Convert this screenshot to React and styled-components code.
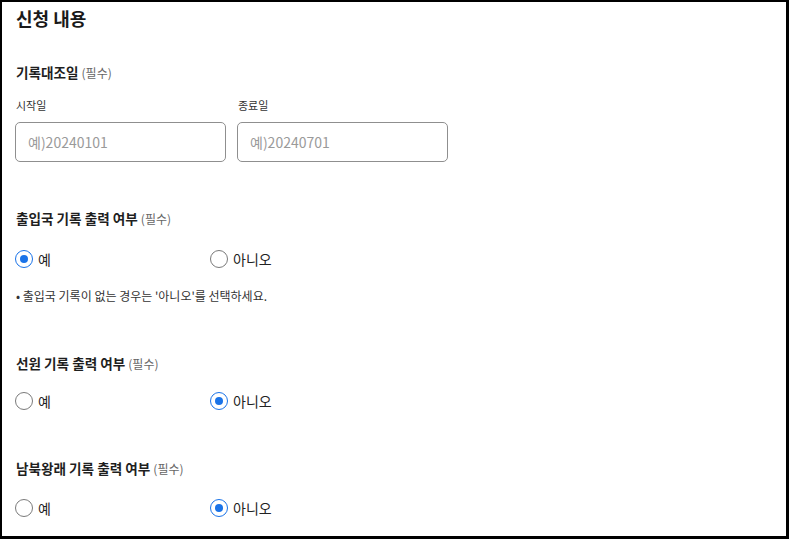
import React, { useState } from 'react';
import styled, { createGlobalStyle } from 'styled-components';

const GlobalStyle = createGlobalStyle`
  html, body {
    margin: 0;
    padding: 0;
    background: #fff;
  }
  body {
    font-family: "Noto Sans CJK KR", "Noto Sans", sans-serif;
    color: #222;
  }
`;

const Page = styled.div`
  box-sizing: border-box;
  height: 100vh;
  border-style: solid;
  border-color: #000;
  border-width: 2px 3px 3px 2px;
  padding: 4px 13px 0 13px;
  background: #fff;
  overflow: hidden;
`;

const Title = styled.h2`
  margin: 0 0 0 1px;
  font-size: 18px;
  line-height: 24px;
  height: 24px;
  font-weight: 700;
  color: #1a1a1a;
`;

const Section = styled.section`
  margin-top: ${(p) => p.$top}px;
`;

const SectionTitle = styled.h3`
  margin: 0 0 0 1px;
  font-size: 13.6px;
  line-height: 20px;
  height: 20px;
  font-weight: 700;
  color: #1f1f1f;
  white-space: nowrap;
`;

const Required = styled.span`
  font-size: 12px;
  line-height: 1;
  font-weight: 400;
  color: #666;
  margin-left: 3px;
`;

const DateRow = styled.div`
  display: flex;
  gap: 11px;
  margin-top: 15px;
`;

const Field = styled.label`
  display: flex;
  flex-direction: column;
  gap: 9px;
  width: 211px;
`;

const FieldLabel = styled.span`
  font-size: 11px;
  line-height: 16px;
  height: 16px;
  color: #333;
  margin-left: 1px;
`;

const Input = styled.input`
  box-sizing: border-box;
  width: 100%;
  height: 40px;
  border: 1px solid #8f8f8f;
  border-radius: 5px;
  padding: 0 12px;
  font-family: inherit;
  font-size: 14px;
  color: #222;
  outline: none;
  &::placeholder {
    color: #9a9a9a;
  }
`;

const RadioGroup = styled.div`
  display: flex;
  margin-top: ${(p) => p.$top ?? 20}px;
`;

const Option = styled.label`
  display: flex;
  align-items: center;
  gap: 5px;
  width: 195px;
  height: 20px;
  font-size: 14px;
  color: #222;
  cursor: pointer;
`;

const HiddenInput = styled.input`
  display: none;
`;

const Circle = styled.span`
  box-sizing: border-box;
  width: 18px;
  height: 18px;
  border-radius: 50%;
  border: ${(p) => (p.$checked ? '1.5px solid #1a73e8' : '1px solid #7a7a7a')};
  display: flex;
  align-items: center;
  justify-content: center;
  background: #fff;

  &::after {
    content: '';
    width: 8px;
    height: 8px;
    border-radius: 50%;
    background: #1a73e8;
    display: ${(p) => (p.$checked ? 'block' : 'none')};
  }
`;

const Note = styled.p`
  margin: 19px 0 0 1px;
  font-size: 12px;
  line-height: 16px;
  height: 16px;
  color: #333;
  white-space: nowrap;
`;

const Radio = ({ name, value, checked, onChange, children }) => (
  <Option>
    <HiddenInput type="radio" name={name} value={value} checked={checked} onChange={() => onChange(value)} />
    <Circle $checked={checked} />
    {children}
  </Option>
);

const YesNo = ({ name, value, onChange, top }) => (
  <RadioGroup $top={top}>
    <Radio name={name} value="Y" checked={value === 'Y'} onChange={onChange}>예</Radio>
    <Radio name={name} value="N" checked={value === 'N'} onChange={onChange}>아니오</Radio>
  </RadioGroup>
);

const App = () => {
  const [immigration, setImmigration] = useState('Y');
  const [crew, setCrew] = useState('N');
  const [interKorean, setInterKorean] = useState('N');

  return (
    <>
      <GlobalStyle />
      <Page>
        <Title>신청 내용</Title>

        <Section $top={32}>
          <SectionTitle>기록대조일<Required>(필수)</Required></SectionTitle>
          <DateRow>
            <Field>
              <FieldLabel>시작일</FieldLabel>
              <Input placeholder="예)20240101" />
            </Field>
            <Field>
              <FieldLabel>종료일</FieldLabel>
              <Input placeholder="예)20240701" />
            </Field>
          </DateRow>
        </Section>

        <Section $top={46}>
          <SectionTitle>출입국 기록 출력 여부<Required>(필수)</Required></SectionTitle>
          <YesNo name="immigration" value={immigration} onChange={setImmigration} top={21} />
          <Note>• 출입국 기록이 없는 경우는 '아니오'를 선택하세요.</Note>
        </Section>

        <Section $top={49}>
          <SectionTitle>선원 기록 출력 여부<Required>(필수)</Required></SectionTitle>
          <YesNo name="crew" value={crew} onChange={setCrew} top={18} />
        </Section>

        <Section $top={47}>
          <SectionTitle>남북왕래 기록 출력 여부<Required>(필수)</Required></SectionTitle>
          <YesNo name="interKorean" value={interKorean} onChange={setInterKorean} top={20} />
        </Section>
      </Page>
    </>
  );
};

export default App;
